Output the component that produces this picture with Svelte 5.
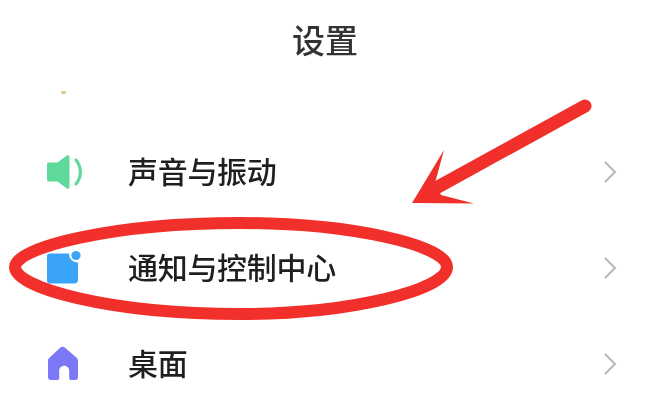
<script>
  const rows = [
    { id: 'sound', label: '声音与振动' },
    { id: 'notify', label: '通知与控制中心' },
    { id: 'desk', label: '桌面' }
  ];
</script>

<div class="page">
  <header class="title">设置</header>
  <div class="spacer"><span class="dot"></span></div>
  <ul class="list">
    {#each rows as row}
      <li class="row">
        <span class="icon">
          {#if row.id === 'sound'}
            <svg width="38" height="36" viewBox="0 0 38 36">
              <path d="M3 8.500h8.500L21 1.500c1-.7 2.500 0 2.500 1.500v30c0 1.500-1.500 2.200-2.500 1.500l-9.500-7H3c-1.300 0-2-.8-2-2V10.500c0-1.200.7-2 2-2z" fill="#5fd89c"/>
              <path d="M30 6C35.800 13 35.800 23 30 30" fill="none" stroke="#5fd89c" stroke-width="3.200" stroke-linecap="round"/>
            </svg>
          {:else if row.id === 'notify'}
            <svg width="38" height="36" viewBox="0 0 38 36">
              <path d="M3.500 3.500H23c.3 5.500 3.500 8.500 9 9V30c0 2-1.200 3.500-3.500 3.500h-25C1.500 33.500 1 32 1 30V6c0-1.500 1-2.500 2.500-2.500z" fill="#3aa5f8"/>
              <circle cx="30" cy="5.500" r="4.600" fill="#3aa5f8"/>
            </svg>
          {:else}
            <svg width="38" height="36" viewBox="0 0 38 36">
              <path fill-rule="evenodd" d="M14.500 1.500c1.300-1 3-1 4.300 0l11.500 10c1.200 1 1.700 2 1.700 3.500v16c0 2-1 3-3 3h-3.500c-1.500 0-2.300-.8-2.300-2.300V25c0-3-2-5.300-5-5.300s-5 2.300-5 5.300v6.700c0 1.500-.8 2.300-2.300 2.300H5c-2 0-3-1-3-3V15c0-1.500.5-2.500 1.700-3.500z" fill="#7b78f5"/>
            </svg>
          {/if}
        </span>
        <span class="label">{row.label}</span>
        <svg class="chev" width="14" height="24" viewBox="0 0 14 24">
          <path d="M2 2l10 10L2 22" fill="none" stroke="#b8b8b8" stroke-width="2"/>
        </svg>
      </li>
    {/each}
  </ul>

  <svg class="marks" width="650" height="404" viewBox="0 0 650 404">
    <path d="M15 267C15 248 110 223 240 223C350 223 447 245 447 267C447 290 350 314 240 314C110 314 15 288 15 267Z" fill="none" stroke="#f2302b" stroke-width="12"/>
    <path d="M585 106L436 188" fill="none" stroke="#f2302b" stroke-width="13" stroke-linecap="round"/>
    <path d="M444 150L435 183L441 195L474 203.500L412 203Z" fill="#f2302b"/>
  </svg>
</div>

<style>
  :global(body) {
    margin: 0;
    background: #fff;
  }
  .page {
    position: relative;
    width: 650px;
    height: 404px;
    overflow: hidden;
    background: #fff;
    font-family: "Noto Sans CJK SC", "Noto Sans", sans-serif;
    color: #1f1f1f;
    filter: blur(0.4px);
  }
  .title {
    height: 78px;
    line-height: 78px;
    text-align: center;
    font-size: 33px;
    font-weight: 500;
    color: #333;
  }
  .spacer {
    height: 46px;
    padding-left: 61px;
    box-sizing: border-box;
    padding-top: 13px;
  }
  .dot {
    display: block;
    width: 5px;
    height: 3px;
    border-radius: 2px;
    background: #dcc98a;
  }
  .list {
    list-style: none;
    margin: 0;
    padding: 0;
  }
  .row {
    display: flex;
    align-items: center;
    height: 96px;
    padding: 0 33px 0 46px;
  }
  .icon {
    display: flex;
    width: 82px;
    flex: none;
  }
  .label {
    flex: 1;
    font-size: 30px;
    font-weight: 500;
    line-height: 1;
    letter-spacing: -0.3px;
    padding-bottom: 5px;
  }
  .marks {
    position: absolute;
    left: 0;
    top: 0;
  }
</style>
